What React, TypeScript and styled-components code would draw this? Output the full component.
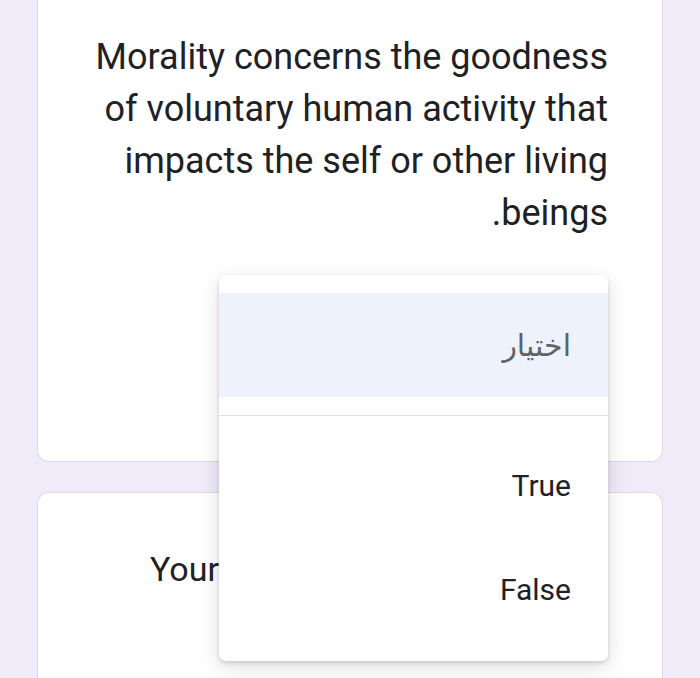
import React from "react";
import styled, { createGlobalStyle } from "styled-components";

const Global = createGlobalStyle`
  html, body { margin: 0; padding: 0; }
  body {
    background: #efebf8;
    font-family: Roboto, "DejaVu Sans", sans-serif;
    color: #202124;
    overflow: hidden;
  }
`;

const Page = styled.div`
  width: 700px;
  height: 678px;
  box-sizing: border-box;
  padding: 0 37px;
  display: flex;
  flex-direction: column;
  gap: 30px;
  overflow: hidden;
`;

const QuestionCard = styled.section`
  background: #ffffff;
  border: 1px solid #dcdae2;
  border-top: none;
  border-radius: 0 0 12px 12px;
  box-sizing: border-box;
  padding: 31px 54px 26px 40px;
  direction: rtl;
  display: flex;
  flex-direction: column;
`;

const NextCard = styled.section`
  background: #ffffff;
  border: 1px solid #dcdae2;
  border-bottom: none;
  border-radius: 12px 12px 0 0;
  box-sizing: border-box;
  flex: 1;
  padding: 50px 55px 0 112px;
`;

const Title = styled.p`
  margin: 0;
  font-size: 36px;
  line-height: 52px;
  font-weight: 400;
  text-align: right;
  color: #202124;
`;

const NextTitle = styled.p`
  margin: 0;
  font-size: 34px;
  line-height: 52px;
  color: #202124;
  white-space: nowrap;
`;

const SelectWrap = styled.div`
  position: relative;
  margin-top: 36px;
  width: 389px;
  height: 160px;
  align-self: flex-start;
`;

const Menu = styled.div`
  position: absolute;
  top: 0;
  right: 0;
  width: 389px;
  z-index: 5;
  background: #ffffff;
  border-radius: 7px;
  padding: 18px 0 20px;
  box-shadow: 0 2px 4px rgba(0, 0, 0, 0.14), 0 6px 22px rgba(0, 0, 0, 0.13);
  display: flex;
  flex-direction: column;
`;

const Option = styled.div<{ $active?: boolean; $muted?: boolean }>`
  height: 104px;
  display: flex;
  align-items: center;
  padding: 0 37px;
  background: ${(p) => (p.$active ? "#edf2fc" : "transparent")};
  color: ${(p) => (p.$muted ? "#5f6368" : "#202124")};
  font-size: ${(p) => (p.$muted ? "30px" : "30px")};
  direction: rtl;
`;

const Divider = styled.hr`
  border: none;
  border-top: 1px solid #e0e0e0;
  margin: 18px 0 17px;
  height: 0;
`;

export default function App() {
  return (
    <>
      <Global />
      <Page>
        <QuestionCard>
          <Title>
            Morality concerns the goodness of voluntary human activity that impacts the self or other living beings.
          </Title>
          <SelectWrap>
            <Menu role="listbox">
              <Option $active $muted>اختيار</Option>
              <Divider />
              <Option>True</Option>
              <Option>False</Option>
            </Menu>
          </SelectWrap>
        </QuestionCard>
        <NextCard>
          <NextTitle>Your answer</NextTitle>
        </NextCard>
      </Page>
    </>
  );
}
